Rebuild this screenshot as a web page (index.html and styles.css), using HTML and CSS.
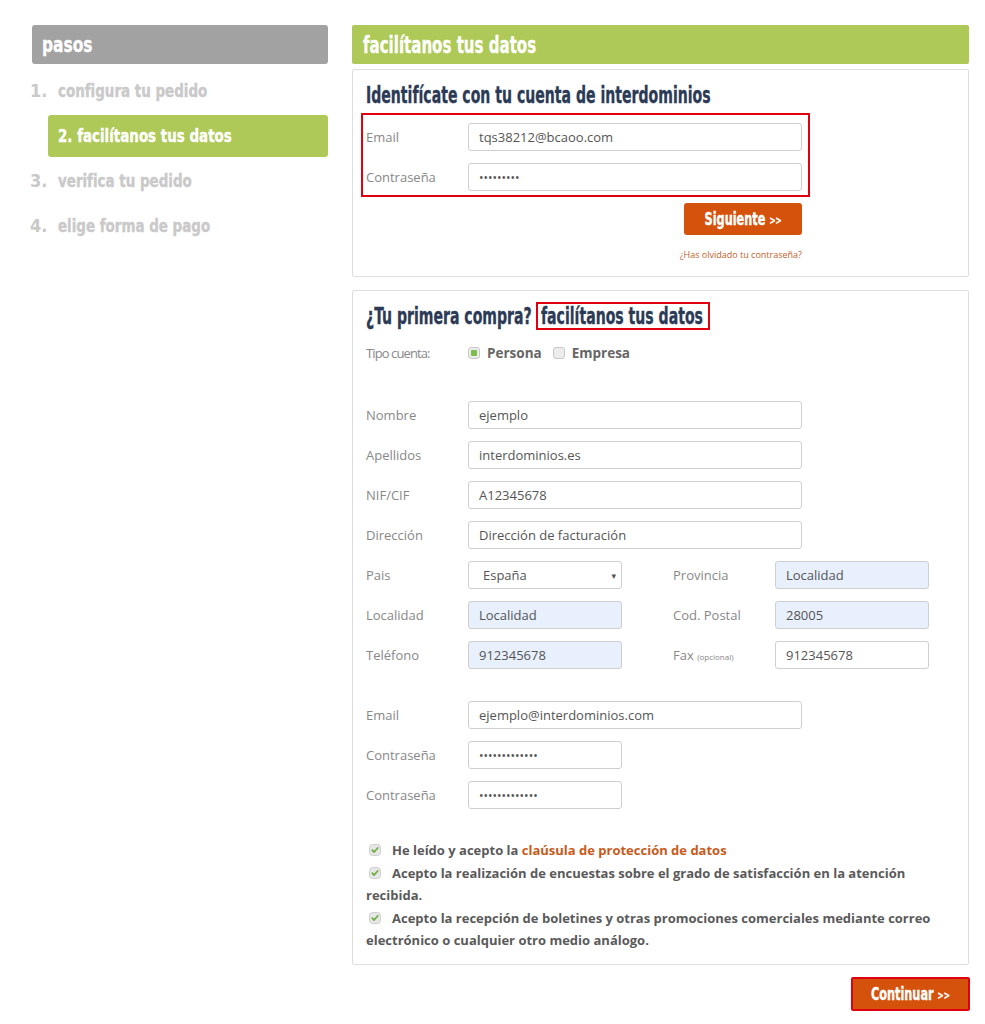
FILE: index.html
```html
<!DOCTYPE html>
<html lang="es">
<head>
<meta charset="utf-8">
<title>facilítanos tus datos</title>
<link rel="stylesheet" href="styles.css">
</head>
<body>
<div class="page">
  <aside class="steps">
    <div class="steps-head"><span class="cond">pasos</span></div>
    <ol class="step-list">
      <li class="step"><span class="num">1.</span><span class="cond">configura tu pedido</span></li>
      <li class="step step-active"><span class="cond">2. facilítanos tus datos</span></li>
      <li class="step"><span class="num">3.</span><span class="cond">verifica tu pedido</span></li>
      <li class="step"><span class="num">4.</span><span class="cond">elige forma de pago</span></li>
    </ol>
  </aside>

  <main class="main">
    <div class="main-head"><span class="cond">facilítanos tus datos</span></div>

    <section class="panel panel-login">
      <h2 class="panel-title"><span class="cond">Identifícate con tu cuenta de interdominios</span></h2>
      <div class="highlight-box">
        <div class="row">
          <label class="lbl">Email</label>
          <input class="inp inp-full" type="text" value="tqs38212@bcaoo.com" readonly>
        </div>
        <div class="row">
          <label class="lbl">Contraseña</label>
          <input class="inp inp-full inp-pass" type="text" value="•••••••••" readonly>
        </div>
      </div>
      <div class="login-actions">
        <button class="btn btn-next"><span class="cond">Siguiente <small class="arr">&gt;&gt;</small></span></button>
        <a class="forgot" href="#">¿Has olvidado tu contraseña?</a>
      </div>
    </section>

    <section class="panel panel-register">
      <h2 class="panel-title title-2"><span class="title-lead"><span class="cond">¿Tu primera compra?</span></span><span class="title-mark"><span class="cond">facilítanos tus datos</span></span></h2>

      <div class="type-row">
        <span class="lbl lbl-type">Tipo cuenta:</span>
        <span class="radio radio-on"><span class="radio-dot"></span></span>
        <span class="type-opt">Persona</span>
        <span class="radio"></span>
        <span class="type-opt">Empresa</span>
      </div>

      <div class="form-block">
        <div class="row"><label class="lbl">Nombre</label><input class="inp inp-full" type="text" value="ejemplo" readonly></div>
        <div class="row"><label class="lbl">Apellidos</label><input class="inp inp-full" type="text" value="interdominios.es" readonly></div>
        <div class="row"><label class="lbl">NIF/CIF</label><input class="inp inp-full" type="text" value="A12345678" readonly></div>
        <div class="row"><label class="lbl">Dirección</label><input class="inp inp-full" type="text" value="Dirección de facturación" readonly></div>
        <div class="row">
          <label class="lbl">Pais</label>
          <div class="inp inp-half sel"><span>España</span><span class="caret">▾</span></div>
          <label class="lbl lbl-2">Provincia</label>
          <input class="inp inp-half auto" type="text" value="Localidad" readonly>
        </div>
        <div class="row">
          <label class="lbl">Localidad</label>
          <input class="inp inp-half auto" type="text" value="Localidad" readonly>
          <label class="lbl lbl-2">Cod. Postal</label>
          <input class="inp inp-half auto" type="text" value="28005" readonly>
        </div>
        <div class="row">
          <label class="lbl">Teléfono</label>
          <input class="inp inp-half auto" type="text" value="912345678" readonly>
          <label class="lbl lbl-2">Fax <small class="opt">(opcional)</small></label>
          <input class="inp inp-half" type="text" value="912345678" readonly>
        </div>
      </div>

      <div class="form-block form-block-2">
        <div class="row"><label class="lbl">Email</label><input class="inp inp-full" type="text" value="ejemplo@interdominios.com" readonly></div>
        <div class="row"><label class="lbl">Contraseña</label><input class="inp inp-half inp-pass" type="text" value="•••••••••••••" readonly></div>
        <div class="row"><label class="lbl">Contraseña</label><input class="inp inp-half inp-pass" type="text" value="•••••••••••••" readonly></div>
      </div>

      <div class="consents">
        <p class="consent"><span class="check"><svg viewBox="0 0 12 12" width="12" height="12"><rect x="0.5" y="0.5" width="11" height="11" rx="3" fill="#e6e6e6" stroke="#d0d0d0"/><path d="M3.3 6.2 L5.1 8 L8.7 4" fill="none" stroke="#6fae3e" stroke-width="1.8" stroke-linecap="round" stroke-linejoin="round"/></svg></span>He leído y acepto la <a class="consent-link" href="#">claúsula de protección de datos</a></p>
        <p class="consent"><span class="check"><svg viewBox="0 0 12 12" width="12" height="12"><rect x="0.5" y="0.5" width="11" height="11" rx="3" fill="#e6e6e6" stroke="#d0d0d0"/><path d="M3.3 6.2 L5.1 8 L8.7 4" fill="none" stroke="#6fae3e" stroke-width="1.8" stroke-linecap="round" stroke-linejoin="round"/></svg></span>Acepto la realización de encuestas sobre el grado de satisfacción en la atención recibida.</p>
        <p class="consent"><span class="check"><svg viewBox="0 0 12 12" width="12" height="12"><rect x="0.5" y="0.5" width="11" height="11" rx="3" fill="#e6e6e6" stroke="#d0d0d0"/><path d="M3.3 6.2 L5.1 8 L8.7 4" fill="none" stroke="#6fae3e" stroke-width="1.8" stroke-linecap="round" stroke-linejoin="round"/></svg></span>Acepto la recepción de boletines y otras promociones comerciales mediante correo electrónico o cualquier otro medio análogo.</p>
      </div>
    </section>

    <div class="submit-row">
      <button class="btn btn-continue"><span class="cond">Continuar <small class="arr">&gt;&gt;</small></span></button>
    </div>
  </main>
</div>
</body>
</html>
```

FILE: styles.css
```css
* { box-sizing: border-box; }

body {
  margin: 0;
  background: #ffffff;
  font-family: "Open Sans", "DejaVu Sans", sans-serif;
  color: #555;
}

.page {
  display: flex;
  gap: 24px;
  padding: 25px 0 0 32px;
}

/* condensed display font */
.steps-head,
.step,
.main-head,
.panel-title,
.btn {
  font-family: "DejaVu Sans Condensed", "DejaVu Sans", sans-serif;
  font-stretch: condensed;
  font-weight: 700;
}

.cond {
  display: inline-block;
  white-space: nowrap;
  transform-origin: 0 50%;
  -webkit-text-stroke: 0.35px currentColor;
}

/* ---- left column ---- */
.steps { width: 296px; flex: none; }

.steps-head {
  height: 39px;
  background: #a2a2a2;
  border-radius: 3px;
  color: #fff;
  font-size: 22px;
  line-height: 39px;
  padding-left: 10px;
}

.steps-head .cond { transform: scaleX(0.78); }

.step-list {
  list-style: none;
  margin: 6px 0 0 0;
  padding: 0;
  display: flex;
  flex-direction: column;
  gap: 3px;
}

.step {
  height: 42px;
  line-height: 42px;
  font-size: 18px;
  color: #c9c9c9;
  margin-left: -2px;
  white-space: nowrap;
}

.step .cond { transform: scaleX(0.83); }

.num { display: inline-block; width: 28px; }

.step-active {
  margin-left: 16px;
  padding-left: 10px;
  background: #aec957;
  border-radius: 3px;
  color: #fff;
}

/* ---- right column ---- */
.main { width: 617px; flex: none; }

.main-head {
  height: 39px;
  background: #aec957;
  border-radius: 2px;
  color: #fff;
  font-size: 23px;
  line-height: 40px;
  padding-left: 11px;
}

.main-head .cond { transform: scaleX(0.727); }

.panel {
  border: 1px solid #dedede;
  border-radius: 2px;
  padding: 11px 12px 0 13px;
}

.panel-login { margin-top: 5px; height: 208px; }
.panel-register { margin-top: 13px; padding-bottom: 12px; }

.panel-title {
  margin: 0;
  font-size: 23px;
  line-height: 28px;
  color: #2b3a55;
  white-space: nowrap;
}

.panel-title .cond { transform: scaleX(0.68); }

.title-2 { display: flex; }

.title-lead { display: inline-block; width: 170px; }

.title-mark {
  display: inline-block;
  width: 174px;
  height: 28px;
  line-height: 24px;
  border: 2px solid #e1000f;
  padding-left: 3px;
}

.highlight-box {
  margin: 4px 0 0 -5px;
  width: 449px;
  border: 2px solid #e1000f;
  padding: 8px 6px 4px 3px;
  display: flex;
  flex-direction: column;
  gap: 12px;
}

.row {
  display: flex;
  align-items: center;
  height: 28px;
}

.lbl {
  width: 102px;
  flex: none;
  font-size: 13px;
  color: #888;
}

.lbl-2 { margin-left: 51px; }

.opt { font-size: 8px; }

.inp {
  height: 28px;
  border: 1px solid #cfcfcf;
  border-radius: 3px;
  background: #fff;
  font-family: "Open Sans", "DejaVu Sans", sans-serif;
  font-size: 13px;
  color: #555;
  padding: 0 10px;
  outline: none;
  flex: none;
}

.inp-full { width: 334px; }
.inp-half { width: 154px; }
.inp-pass { font-size: 12px; letter-spacing: 0; }
.auto { background: #e8f0fe; }

.sel {
  display: flex;
  align-items: center;
  justify-content: space-between;
  padding: 0 5px 0 14px;
}

.caret { font-size: 9px; color: #555; }

.login-actions {
  display: flex;
  flex-direction: column;
  align-items: flex-end;
  width: 436px;
  margin-top: 6px;
}

.btn {
  border: none;
  background: #d4520b;
  color: #fff;
  border-radius: 3px;
  font-size: 17px;
  cursor: pointer;
  padding: 0;
  white-space: nowrap;
}

.btn .cond { transform: scaleX(0.74); transform-origin: 50% 50%; }

.arr { font-size: 11px; vertical-align: 1px; }

.btn-next { width: 118px; height: 32px; }

.forgot {
  margin-top: 14px;
  font-size: 9px;
  line-height: 12px;
  color: #c2622a;
  text-decoration: none;
}

.type-row {
  display: flex;
  align-items: center;
  height: 20px;
  margin-top: 13px;
}

.lbl-type { letter-spacing: -0.9px; }

.radio {
  width: 12px;
  height: 12px;
  border: 1px solid #c8c8c8;
  border-radius: 3px;
  background: #ececec;
  display: flex;
  align-items: center;
  justify-content: center;
  flex: none;
}

.radio-dot {
  width: 6px;
  height: 6px;
  border-radius: 1px;
  background: #7cbd4c;
}

.type-opt {
  font-size: 13.5px;
  font-weight: 700;
  color: #666;
  margin: 0 11px 0 7px;
}

.form-block {
  margin-top: 38px;
  display: flex;
  flex-direction: column;
  gap: 12px;
}

.form-block-2 { margin-top: 32px; }

.consents { margin-top: 30px; }

.consent {
  margin: 0;
  font-size: 13px;
  font-weight: 700;
  line-height: 22.5px;
  color: #5a5a5a;
}

.check {
  display: inline-block;
  width: 12px;
  height: 12px;
  margin: 0 11px 0 3px;
  vertical-align: -1px;
}

.check svg { display: block; }

.consent-link { color: #c85a1c; text-decoration: none; }

.submit-row {
  display: flex;
  justify-content: flex-end;
  margin-top: 12px;
}

.btn-continue {
  width: 119px;
  height: 34px;
  border: 2px solid #e1000f;
  border-radius: 2px;
  margin-right: -1px;
}
```
